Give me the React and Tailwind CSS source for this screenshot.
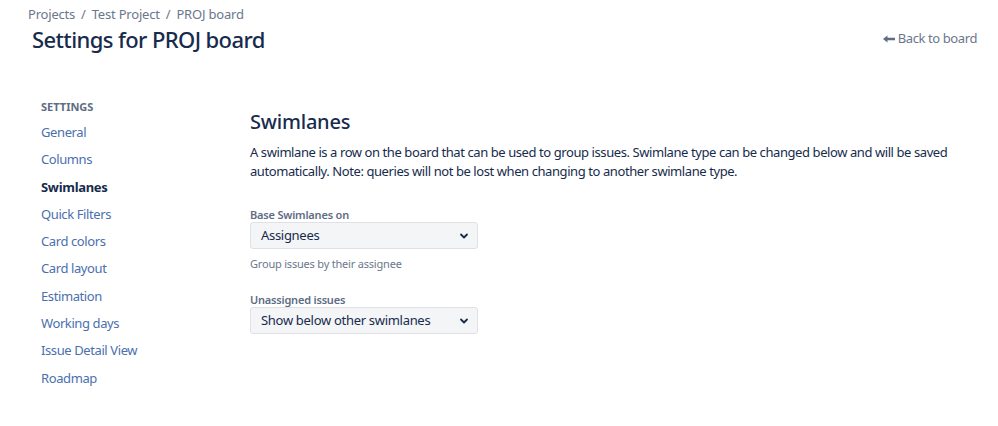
import React from "react";

const font = { fontFamily: '"Noto Sans", "Open Sans", sans-serif' };

function Chevron() {
  return (
    <svg width="10" height="10" viewBox="0 0 10 10" className="shrink-0">
      <path d="M2 3.5 L5 6.5 L8 3.5" fill="none" stroke="#172b4d" strokeWidth="1.8" strokeLinecap="round" strokeLinejoin="round" />
    </svg>
  );
}

function Select({ value }) {
  return (
    <div className="flex h-[27px] w-[228px] items-center justify-between rounded-[3px] border border-[#dfe1e6] bg-[#f4f5f7] pl-[10px] pr-[8px] text-[13px] tracking-[-0.3px] text-[#172b4d]">
      <span>{value}</span>
      <Chevron />
    </div>
  );
}

const items = [
  "General",
  "Columns",
  "Swimlanes",
  "Quick Filters",
  "Card colors",
  "Card layout",
  "Estimation",
  "Working days",
  "Issue Detail View",
  "Roadmap",
];

export default function App() {
  return (
    <div className="h-[426px] w-[998px] bg-white" style={font}>
      <div className="flex items-start justify-between pl-[28px] pr-[21px] pt-[5px]">
        <div>
          <div className="flex items-center gap-[6px] text-[13px] leading-[18px] tracking-[-0.2px] text-[#6b778c]">
            <span>Projects</span>
            <span>/</span>
            <span>Test Project</span>
            <span>/</span>
            <span>PROJ board</span>
          </div>
          <h1 className="mt-[1px] pl-[4px] text-[22px] font-medium leading-[30px] tracking-[-0.6px] text-[#172b4d]">
            Settings for PROJ board
          </h1>
        </div>
        <div className="mt-[24px] flex items-center gap-[3px] text-[13px] tracking-[-0.4px] text-[#6b778c]">
          <svg width="12" height="8" viewBox="0 0 12 8">
            <path d="M0 4 L4.5 0.5 L4.5 2.8 L12 2.8 L12 5.2 L4.5 5.2 L4.5 7.5 Z" fill="#5e6c84" />
          </svg>
          <span>Back to board</span>
        </div>
      </div>

      <div className="mt-[42px] flex">
        <div className="w-[250px] shrink-0 pl-[41px] pt-[3px]">
          <div className="text-[11px] font-bold leading-[16px] text-[#5e6c84]">SETTINGS</div>
          <div className="mt-[8px] flex flex-col gap-[8.3px]">
            {items.map((it) =>
              it === "Swimlanes" ? (
                <div key={it} className="text-[13px] font-bold leading-[19px] tracking-[-0.3px] text-[#172b4d]">
                  {it}
                </div>
              ) : (
                <div key={it} className="text-[13px] leading-[19px] tracking-[-0.4px] text-[#4a70ae]">
                  {it}
                </div>
              )
            )}
          </div>
        </div>
        <div className="pt-[12px]">
          <h2 className="text-[20px] font-medium leading-[28px] tracking-[-0.2px] text-[#172b4d]">Swimlanes</h2>
          <p className="mt-[7px] w-[720px] text-[13px] leading-[19px] tracking-[-0.42px] text-[#172b4d]">
            A swimlane is a row on the board that can be used to group issues. Swimlane type can be changed below and will be saved automatically. Note: queries will not be lost when changing to another swimlane type.
          </p>
          <div className="mt-[27px] text-[11px] font-semibold leading-[14px] tracking-[-0.2px] text-[#5e6c84]">Base Swimlanes on</div>
          <div>
            <Select value="Assignees" />
          </div>
          <div className="mt-[8px] text-[11px] leading-[14px] tracking-[-0.2px] text-[#6b778c]">Group issues by their assignee</div>
          <div className="mt-[22px] text-[11px] font-semibold leading-[14px] tracking-[-0.2px] text-[#5e6c84]">Unassigned issues</div>
          <div>
            <Select value="Show below other swimlanes" />
          </div>
        </div>
      </div>
    </div>
  );
}
